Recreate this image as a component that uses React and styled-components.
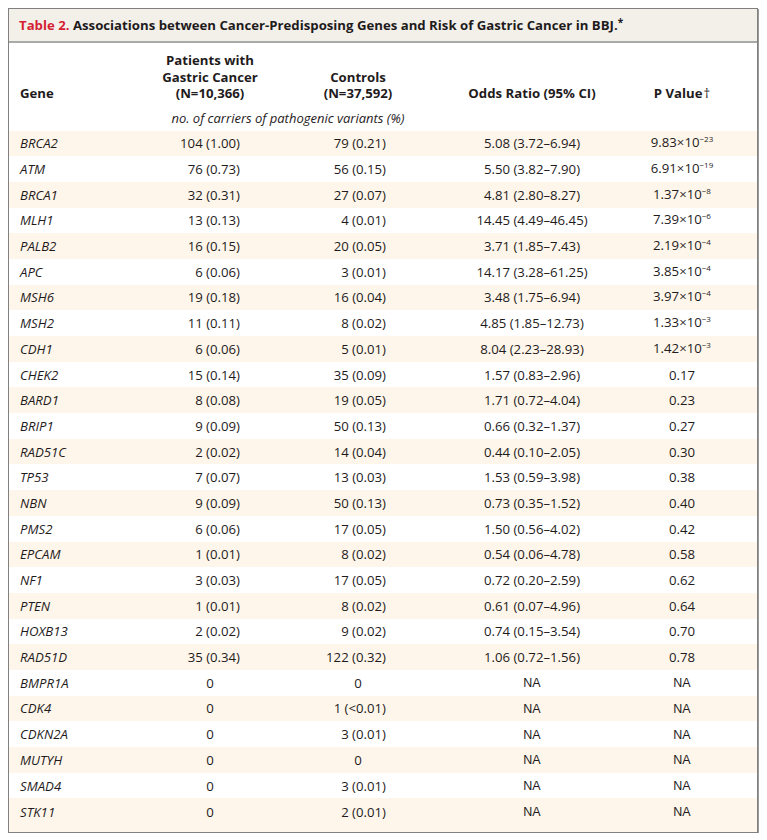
import React from 'react'
import styled, { createGlobalStyle } from 'styled-components'

const GlobalStyle = createGlobalStyle`
  html, body {
    margin: 0;
    background: #ffffff;
  }
  body {
    font-family: "Open Sans", "Noto Sans", sans-serif;
    color: #1f1b1c;
  }
`;

const rows = [
  ['BRCA2', '104 (1.00)', '79 (0.21)', '5.08 (3.72–6.94)', ['9.83×10', '−23']],
  ['ATM', '76 (0.73)', '56 (0.15)', '5.50 (3.82–7.90)', ['6.91×10', '−19']],
  ['BRCA1', '32 (0.31)', '27 (0.07)', '4.81 (2.80–8.27)', ['1.37×10', '−8']],
  ['MLH1', '13 (0.13)', '4 (0.01)', '14.45 (4.49–46.45)', ['7.39×10', '−6']],
  ['PALB2', '16 (0.15)', '20 (0.05)', '3.71 (1.85–7.43)', ['2.19×10', '−4']],
  ['APC', '6 (0.06)', '3 (0.01)', '14.17 (3.28–61.25)', ['3.85×10', '−4']],
  ['MSH6', '19 (0.18)', '16 (0.04)', '3.48 (1.75–6.94)', ['3.97×10', '−4']],
  ['MSH2', '11 (0.11)', '8 (0.02)', '4.85 (1.85–12.73)', ['1.33×10', '−3']],
  ['CDH1', '6 (0.06)', '5 (0.01)', '8.04 (2.23–28.93)', ['1.42×10', '−3']],
  ['CHEK2', '15 (0.14)', '35 (0.09)', '1.57 (0.83–2.96)', '0.17'],
  ['BARD1', '8 (0.08)', '19 (0.05)', '1.71 (0.72–4.04)', '0.23'],
  ['BRIP1', '9 (0.09)', '50 (0.13)', '0.66 (0.32–1.37)', '0.27'],
  ['RAD51C', '2 (0.02)', '14 (0.04)', '0.44 (0.10–2.05)', '0.30'],
  ['TP53', '7 (0.07)', '13 (0.03)', '1.53 (0.59–3.98)', '0.38'],
  ['NBN', '9 (0.09)', '50 (0.13)', '0.73 (0.35–1.52)', '0.40'],
  ['PMS2', '6 (0.06)', '17 (0.05)', '1.50 (0.56–4.02)', '0.42'],
  ['EPCAM', '1 (0.01)', '8 (0.02)', '0.54 (0.06–4.78)', '0.58'],
  ['NF1', '3 (0.03)', '17 (0.05)', '0.72 (0.20–2.59)', '0.62'],
  ['PTEN', '1 (0.01)', '8 (0.02)', '0.61 (0.07–4.96)', '0.64'],
  ['HOXB13', '2 (0.02)', '9 (0.02)', '0.74 (0.15–3.54)', '0.70'],
  ['RAD51D', '35 (0.34)', '122 (0.32)', '1.06 (0.72–1.56)', '0.78'],
  ['BMPR1A', '0', '0', 'NA', 'NA'],
  ['CDK4', '0', '1 (<0.01)', 'NA', 'NA'],
  ['CDKN2A', '0', '3 (0.01)', 'NA', 'NA'],
  ['MUTYH', '0', '0', 'NA', 'NA'],
  ['SMAD4', '0', '3 (0.01)', 'NA', 'NA'],
  ['STK11', '0', '2 (0.01)', 'NA', 'NA'],
];

function Count({ value, $pad }) {
  const zero = value === '0';
  return (
    <NumCell $pad={$pad} $zero={zero}>
      {value}
    </NumCell>
  );
}

function Stat({ value }) {
  if (value === 'NA') return <CenterCell><NA>NA</NA></CenterCell>;
  if (Array.isArray(value)) {
    return (
      <CenterCell>
        {value[0]}
        <Sup>{value[1]}</Sup>
      </CenterCell>
    );
  }
  return <CenterCell>{value}</CenterCell>;
}

export default function App() {
  return (
    <>
      <GlobalStyle />
      <Frame>
        <TitleBar>
          <TableNo>Table 2.</TableNo> Associations between Cancer-Predisposing Genes and Risk of Gastric Cancer in BBJ.<Star>*</Star>
        </TitleBar>
        <HeadRow>
          <HeadCell $align="left">Gene</HeadCell>
          <HeadCell>Patients with<br />Gastric Cancer<br />(N=10,366)</HeadCell>
          <HeadCell>Controls<br />(N=37,592)</HeadCell>
          <HeadCell>Odds Ratio (95% CI)</HeadCell>
          <HeadCell>P Value<Dagger>†</Dagger></HeadCell>
        </HeadRow>
        <UnitRow>
          <UnitLabel>no. of carriers of pathogenic variants (%)</UnitLabel>
        </UnitRow>
        {rows.map((r, i) => (
          <Row key={r[0]} $shade={i % 2 === 0} $last={i === rows.length - 1}>
            <GeneCell>{r[0]}</GeneCell>
            <Count value={r[1]} $pad={40} />
            <Count value={r[2]} $pad={50} />
            <Stat value={r[3]} />
            <Stat value={r[4]} />
          </Row>
        ))}
      </Frame>
    </>
  );
}

const columns = '131px 140px 156px 192px 108px 1fr';

const Frame = styled.section`
  box-sizing: border-box;
  width: 750px;
  margin: 8px 0 0 8px;
  border: 1px solid #808080;
  box-shadow: 1px 1px 0 #9a9a9a;
  background: #ffffff;
`;

const TitleBar = styled.h1`
  margin: 0;
  height: 32px;
  padding-left: 10px;
  display: flex;
  align-items: center;
  white-space: pre;
  background: #f3f0ea;
  border-bottom: 2px solid #a9a9a9;
  font-size: 13.2px;
  font-weight: 700;
  color: #1f1b1c;
`;

const TableNo = styled.span`
  color: #d51f35;
`;

const Star = styled.span`
  font-size: 10px;
  position: relative;
  top: -3px;
`;

const HeadRow = styled.div`
  display: grid;
  grid-template-columns: ${columns};
  align-items: end;
  padding-top: 9px;
`;

const HeadCell = styled.div`
  font-size: 13.2px;
  font-weight: 700;
  line-height: 16.5px;
  text-align: ${p => p.$align || 'center'};
  padding-left: ${p => (p.$align === 'left' ? '11px' : '0')};
`;

const Dagger = styled.span`
  font-weight: 400;
  margin-left: 1px;
`;

const UnitRow = styled.div`
  display: grid;
  grid-template-columns: ${columns};
  padding: 8px 0 5px;
`;

const UnitLabel = styled.div`
  grid-column: 2 / 4;
  text-align: center;
  font-size: 13px;
  font-style: italic;
  line-height: 16px;
`;

const Row = styled.div`
  display: grid;
  grid-template-columns: ${columns};
  align-items: center;
  height: ${p => (p.$last ? '34px' : '25.7px')};
  padding-bottom: ${p => (p.$last ? '7px' : '0')};
  box-sizing: border-box;
  background: ${p => (p.$shade ? '#fef6ea' : '#ffffff')};
  font-size: 13.2px;
  line-height: 16px;
`;

const GeneCell = styled.div`
  padding-left: 11px;
  font-style: italic;
`;

const NumCell = styled.div`
  text-align: ${p => (p.$zero ? 'center' : 'right')};
  padding-right: ${p => (p.$zero ? 0 : p.$pad)}px;
`;

const CenterCell = styled.div`
  text-align: center;
`;

const Sup = styled.sup`
  font-size: 8px;
  vertical-align: 0;
  position: relative;
  top: -5px;
`;

const NA = styled.span`
  font-family: "Liberation Sans", Arial, sans-serif;
  font-size: 12.5px;
`;
